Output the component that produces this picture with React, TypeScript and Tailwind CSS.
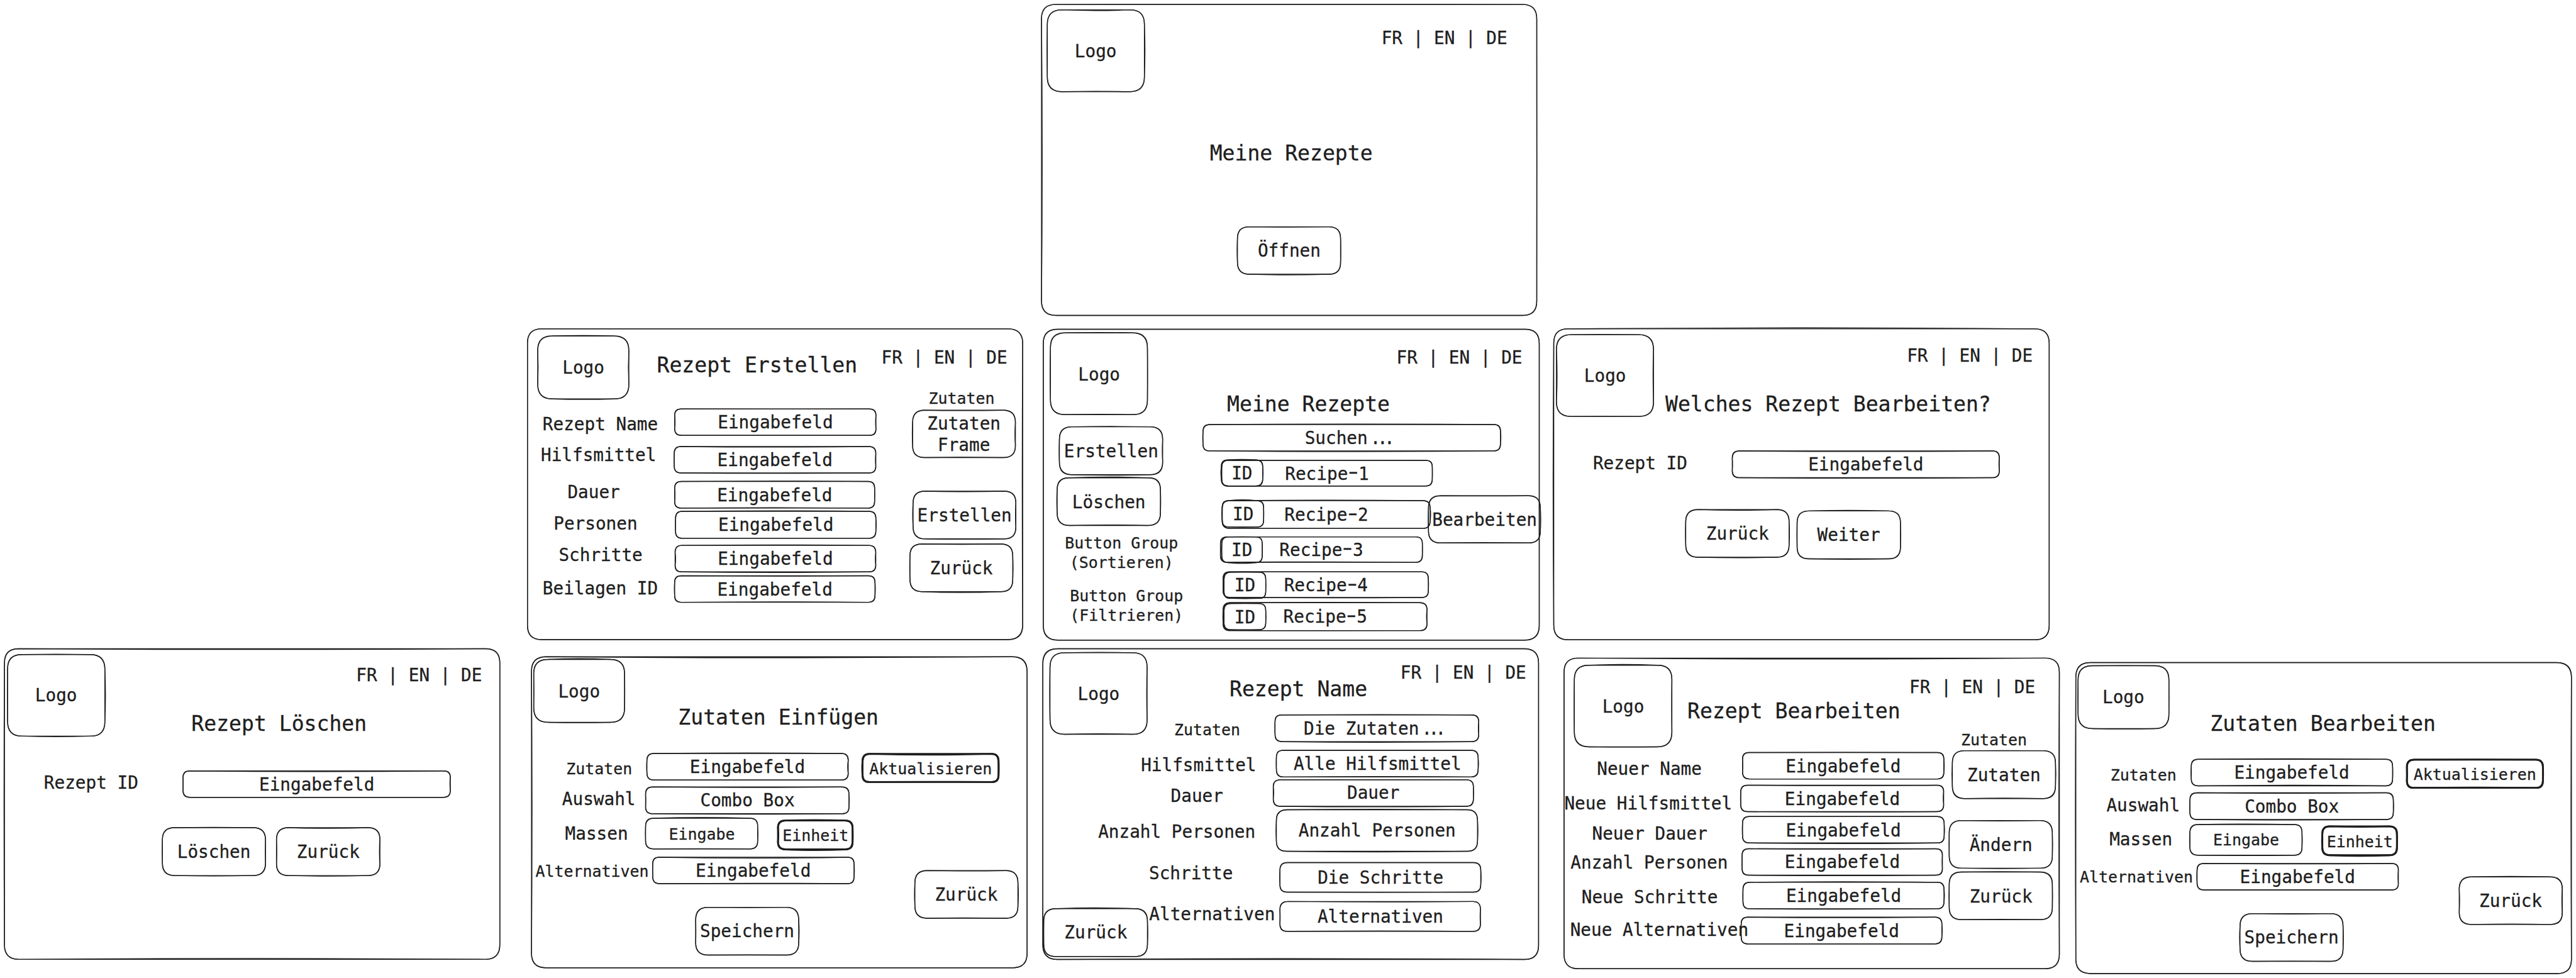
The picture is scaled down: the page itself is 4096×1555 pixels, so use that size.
import React, { type ReactNode } from "react";

type Size = "sm" | "md" | "lg";
type Bow = [number, number, number, number];

const sizeClass: Record<Size, string> = {
  sm: "text-[35.04px] leading-[43px]",
  md: "text-[38.93px] leading-[48px]",
  lg: "text-[46.5px] leading-[58px]",
};

/** Rounded rectangle whose sides sag by the given amounts: top, right, bottom, left. */
function outline(w: number, h: number, bow: Bow, jitter: Bow) {
  const base = Math.min(32, Math.min(w, h) * 0.25);
  const [a, b, c, d] = jitter.map((j) => base + j);
  const [t, r, bt, l] = bow.map((n) => n * 2);
  return [
    `M ${a} 0`,
    `Q ${w / 2} ${-t} ${w - b} 0`,
    `Q ${w} 0 ${w} ${b}`,
    `Q ${w + r} ${h / 2} ${w} ${h - c}`,
    `Q ${w} ${h} ${w - c} ${h}`,
    `Q ${w / 2} ${h + bt} ${d} ${h}`,
    `Q 0 ${h} 0 ${h - d}`,
    `Q ${-l} ${h / 2} 0 ${a}`,
    `Q 0 0 ${a} 0`,
    "Z",
  ].join(" ");
}

type SketchProps = { w: number; h: number; bold?: boolean; bow?: Bow };

/** Pencil outline: one straight pass and one slightly bent pass. */
function Sketch({ w, h, bold, bow = [0.8, 0.4, 0.8, 0.4] }: SketchProps) {
  const n = Math.round(w * 7 + h * 13);
  const jitter: Bow = [(n % 4) - 1, ((n >> 1) % 4) - 1, ((n >> 2) % 4) - 1, ((n >> 3) % 4) - 1];
  return (
    <svg
      className="pointer-events-none absolute inset-0 h-full w-full overflow-visible"
      viewBox={`0 0 ${w} ${h}`}
      fill="none"
      stroke="#1e1e1e"
      strokeWidth={bold ? 4 : 2}
      strokeLinecap="round"
    >
      <path d={outline(w, h, [0, 0, 0, 0], [0, 0, 0, 0])} />
      <path d={outline(w, h, bow, jitter)} />
    </svg>
  );
}

/** Draws the wide hyphen and the tight ellipsis of the board's code font. */
function Glyphs({ text }: { text: string }) {
  return (
    <>
      {text.split(/(\.\.\.|-)/).map((part, i) => {
        if (part === "...")
          return (
            <span key={i} className="relative -left-[6px] inline-block w-[3ch] text-center tracking-[-7.9px]">
              ...
            </span>
          );
        if (part === "-")
          return (
            <span key={i} className="relative -top-[3px] inline-block scale-x-[1.65]">
              -
            </span>
          );
        return part;
      })}
    </>
  );
}

type BoxProps = SketchProps & { text: string; size?: Size; className?: string; children?: ReactNode };

function Box({ w, h, text, size = "md", bold, bow, className = "relative", children }: BoxProps) {
  return (
    <div className={`flex shrink-0 items-center justify-center ${className}`} style={{ width: w, height: h }}>
      <Sketch w={w} h={h} bold={bold} bow={bow} />
      <span className={`pt-[2px] text-center whitespace-pre ${sizeClass[size]}`}>
        <Glyphs text={text} />
      </span>
      {children}
    </div>
  );
}

function Text({ children, size = "md", className = "" }: { children: ReactNode; size?: Size; className?: string }) {
  return <span className={`shrink-0 text-center whitespace-pre ${sizeClass[size]} ${className}`}>{children}</span>;
}

function Languages({ className }: { className: string }) {
  return <Text className={className}>FR | EN | DE</Text>;
}

function Screen({ w, h, bow, className = "", children }: SketchProps & { className?: string; children: ReactNode }) {
  return (
    <section className={`relative flex shrink-0 flex-col items-start ${className}`} style={{ width: w, height: h }}>
      <Sketch w={w} h={h} bow={bow} />
      {children}
    </section>
  );
}

function Column({ className = "", children }: { className?: string; children: ReactNode }) {
  return <div className={`flex shrink-0 flex-col items-start ${className}`}>{children}</div>;
}

function Row({ className = "", children }: { className?: string; children: ReactNode }) {
  return <div className={`flex shrink-0 items-start ${className}`}>{children}</div>;
}

function StartScreen() {
  return (
    <Screen w={1107} h={695} bow={[0.2, 0.3, 0.2, -1.6]}>
      <Row className="w-full justify-between pt-[12.6px] pr-[66px] pl-[12.4px]">
        <Box text="Logo" w={217} h={183} bow={[-1.6, 1.2, -1, 0.6]} />
        <Languages className="mt-[40px]" />
      </Row>
      <Column className="w-full items-center!">
        <Text size="lg" className="mt-[109px] pl-[9px]">
          Meine Rezepte
        </Text>
        <Box className="relative mt-[134.5px]" text="Öffnen" w={230.5} h={106} bow={[-0.6, 0.5, 1.4, 0.8]} />
      </Column>
    </Screen>
  );
}

function CreateScreen() {
  return (
    <Screen className="mt-[0.5px]" w={1107} h={694.7} bow={[-0.4, -1, 0.4, -0.6]}>
      <Row className="h-[132px] pt-[16px] pl-[23.3px]">
        <Box text="Logo" w={203.6} h={140.5} bow={[1, -1, 1.2, -0.8]} />
        <Text size="lg" className="mt-[35.6px] ml-[62.6px]">
          Rezept Erstellen
        </Text>
        <Languages className="mt-[23.4px] ml-[54px]" />
      </Row>
      <Row>
        <Column className="w-[328px] pt-[57.4px] pl-[30px]">
          <Text className="ml-[4px]">Rezept Name</Text>
          <Text className="mt-[21px]">Hilfsmittel</Text>
          <Text className="mt-[34.2px] ml-[59.7px]">Dauer</Text>
          <Text className="mt-[23.6px] ml-[28.5px]">Personen</Text>
          <Text className="mt-[21.8px] ml-[40px]">Schritte</Text>
          <Text className="mt-[26px] ml-[4px]">Beilagen ID</Text>
        </Column>
        <Column className="w-[527px] pt-[46.6px]">
          <Box className="relative ml-[1.3px]" text="Eingabefeld" w={450} h={59.2} bow={[-0.3, -0.8, -0.3, -0.9]} />
          <Box className="relative mt-[25px]" text="Eingabefeld" w={450.7} h={59.2} bow={[-1.2, -0.8, 0.8, 0.4]} />
          <Box className="relative mt-[19.3px] ml-[1.3px]" text="Eingabefeld" w={447} h={59.7} bow={[0.8, 0.4, -0.8, -0.8]} />
          <Box className="relative mt-[6.4px] ml-[3.5px]" text="Eingabefeld" w={447.8} h={60.2} bow={[1.2, 0.8, 0.3, 0.4]} />
          <Box className="relative mt-[16px] ml-[2px]" text="Eingabefeld" w={448.6} h={59.2} bow={[0.9, -1, 1.4, -1.2]} />
          <Box className="relative mt-[9.3px] ml-[1.3px]" text="Eingabefeld" w={447.8} h={59.2} bow={[-0.7, 0.8, -0.9, 0.7]} />
        </Column>
        <Column>
          <Text size="sm" className="mt-[0.8px] ml-[41.7px]">
            Zutaten
          </Text>
          <Box className="relative mt-[6.5px] ml-[5.8px]" text={"Zutaten\nFrame"} w={229.7} h={105.6} bow={[-0.8, -1, -0.5, 0.8]} />
          <Box className="relative mt-[75.3px] ml-[7.2px]" text="Erstellen" w={229.7} h={106.5} bow={[-1, -0.8, 0.8, 1]} />
          <Box className="relative mt-[11.5px]" text="Zurück" w={229.7} h={106.5} bow={[-0.6, 0.8, 1.8, 0.6]} />
        </Column>
      </Row>
    </Screen>
  );
}

function ListScreen() {
  return (
    <Screen className="mt-[0.9px] ml-[45.9px]" w={1108.6} h={694.8} bow={[0.4, 0.2, 0.3, 0.3]}>
      <Row>
        <Column className="w-[357.7px] pt-[8.7px] pl-[16.6px]">
          <Box text="Logo" w={216.8} h={182.8} bow={[0.9, 0.4, -0.8, 0.7]} />
          <Box className="relative mt-[27px] ml-[20px]" text="Erstellen" w={230.8} h={107} bow={[0.8, -0.8, 1, 0.6]} />
          <Box className="relative mt-[7.3px] ml-[14.8px]" text="Löschen" w={230.8} h={106.5} bow={[1.8, 0.6, -1.2, 0.8]} />
          <Text size="sm" className="mt-[17px] ml-[32px]">
            {"Button Group\n(Sortieren)"}
          </Text>
          <Text size="sm" className="mt-[32px] ml-[43px]">
            {"Button Group\n(Filtrieren)"}
          </Text>
        </Column>
        <Column>
          <Languages className="mt-[40.8px] ml-[432px]" />
          <Text size="lg" className="mt-[50.3px] ml-[53.3px]">
            Meine Rezepte
          </Text>
          <Box className="relative mt-[16.4px]" text="Suchen..." w={665} h={58.8} bow={[1.3, 0.8, 1.5, 0.6]} />
          <Box className="relative mt-[21px] ml-[41.4px]" text="Recipe-1" w={470.5} h={57.4} bow={[0.2, 0.4, -0.4, 0.8]}>
            <Box className="absolute -top-px -left-px" text="ID" w={92.5} h={58.3} bow={[1.2, 0.8, 0.6, 1]} />
          </Box>
          <Box className="relative mt-[32.6px] ml-[43px]" text="Recipe-2" w={464.6} h={62} bow={[1, 1.2, 0.3, 0.3]}>
            <Box className="absolute top-0 left-0" text="ID" w={92.5} h={58.8} bow={[1.8, 0.4, 0.5, 1]} />
            <Box className="absolute -top-[10.5px] left-[461px]" text="Bearbeiten" w={250} h={105.6} bow={[-0.5, 0.9, -0.8, 0.6]} />
          </Box>
          <Box className="relative mt-[18.8px] ml-[38.4px]" text="Recipe-3" w={451.3} h={56.9} bow={[-0.4, 0.3, -1, -0.6]}>
            <Box className="absolute top-[0.5px] left-[3px]" text="ID" w={90.3} h={57.4} bow={[0.4, 0.5, 2, 0.5]} />
          </Box>
          <Box className="relative mt-[21.7px] ml-[45px]" text="Recipe-4" w={458.7} h={57.4} bow={[-0.3, 0.5, 0.8, -0.4]}>
            <Box className="absolute top-[0.5px] left-[1.5px]" text="ID" w={93.2} h={58.3} bow={[0.9, 0.5, 0.6, 1]} />
          </Box>
          <Box className="relative mt-[11.5px] ml-[45px]" text="Recipe-5" w={455.7} h={62.5} bow={[0.6, -1, 0.3, 0.5]}>
            <Box className="absolute top-[2.3px] left-[1.5px]" text="ID" w={93.2} h={58.3} bow={[0.4, 0.6, 0.8, 0.9]} />
          </Box>
        </Column>
      </Row>
    </Screen>
  );
}

function ChooseScreen() {
  return (
    <Screen className="ml-[32.3px]" w={1107.5} h={695} bow={[2.2, 0.2, 0.3, 1.4]}>
      <Row className="pt-[13.3px] pl-[6.6px]">
        <Box text="Logo" w={217} h={182.8} bow={[0.6, -1, -0.3, -1.4]} />
        <Column className="pl-[26.2px]">
          <Languages className="mt-[23.4px] ml-[540px]" />
          <Text size="lg" className="mt-[54.4px]">
            Welches Rezept Bearbeiten?
          </Text>
        </Column>
      </Row>
      <Row className="gap-[100.6px] pt-[76.6px] pl-[88px]">
        <Text className="mt-[2.2px]">Rezept ID</Text>
        <Box text="Eingabefeld" w={597} h={59.7} bow={[-1.1, -0.8, 1.2, -0.6]} />
      </Row>
      <Row className="gap-[17.6px] pt-[70.7px] pl-[295.6px]">
        <Box text="Zurück" w={231} h={106.5} bow={[-1.4, 0.8, 1.1, 0.6]} />
        <Box className="relative mt-[2.8px]" text="Weiter" w={231} h={107} bow={[1.3, 0.6, 1, 0.5]} />
      </Row>
    </Screen>
  );
}

function DeleteScreen() {
  return (
    <Screen w={1107.2} h={694.3} bow={[-1.6, 0.3, -1.8, 1]}>
      <Row className="pt-[12.9px] pl-[6.5px]">
        <Box text="Logo" w={217.4} h={182.3} bow={[0.8, 1.3, 1.4, 0.5]} />
        <Column className="pl-[193.8px]">
          <Languages className="mt-[23.3px] ml-[368.3px]" />
          <Text size="lg" className="mt-[54.5px]">
            Rezept Löschen
          </Text>
        </Column>
      </Row>
      <Row className="gap-[100.2px] pt-[76.5px] pl-[88px]">
        <Text className="mt-[2.3px]">Rezept ID</Text>
        <Box text="Eingabefeld" w={597.6} h={59.2} bow={[-1.4, -0.8, -0.5, -0.5]} />
      </Row>
      <Row className="gap-[24.7px] pt-[67.6px] pl-[352.6px]">
        <Box text="Löschen" w={230.5} h={107} bow={[0.9, -0.6, 0.8, 0.5]} />
        <Box text="Zurück" w={231.2} h={107} bow={[-1.4, -1, 1.2, -0.6]} />
      </Row>
    </Screen>
  );
}

type IngredientsProps = { title: string; titleClass: string; className: string; bows: Bow[] };

function IngredientsScreen({ title, titleClass, className, bows }: IngredientsProps) {
  return (
    <Screen className={className} w={1107.8} h={695} bow={bows[0]}>
      <Row className="pt-[6.8px] pl-[4.7px]">
        <Box text="Logo" w={203} h={140.5} bow={bows[1]} />
        <Text size="lg" className={`mt-[100.7px] ${titleClass}`}>
          {title}
        </Text>
      </Row>
      <Row>
        <Column className="w-[255.3px] pt-[64px] pl-[8.8px]">
          <Text size="sm" className="ml-[68.4px]">
            Zutaten
          </Text>
          <Text className="mt-[23.3px] ml-[59.5px]">Auswahl</Text>
          <Text className="mt-[27.5px] ml-[66.2px]">Massen</Text>
          <Text size="sm" className="mt-[37.8px]">
            Alternativen
          </Text>
        </Column>
        <Column className="pt-[50.6px]">
          <Row className="gap-[32.3px] pl-[2.3px]">
            <Box text="Eingabefeld" w={450} h={59.4} bow={bows[2]} />
            <Box className="relative mt-px" text="Aktualisieren" w={304} h={62.9} size="sm" bold bow={bows[3]} />
          </Row>
          <Box className="relative mt-[10.9px]" text="Combo Box" w={454.7} h={59.7} bow={bows[4]} />
          <Row className="gap-[45.5px] pt-[11px]">
            <Box text="Eingabe" w={250.5} h={68.4} size="sm" bow={bows[5]} />
            <Box className="relative mt-[4.6px]" text="Einheit" w={166.7} h={64.5} size="sm" bold bow={bows[6]} />
          </Row>
          <Row className="gap-[136px] pt-[18px]">
            <Column className="gap-[52.6px]">
              <Box className="relative ml-[15.2px]" text="Eingabefeld" w={450} h={59.2} bow={bows[7]} />
              <Box className="relative ml-[111.4px]" text="Speichern" w={230.3} h={106.7} bow={bows[8]} />
            </Column>
            <Box className="relative mt-[30px]" text="Zurück" w={230.3} h={106.3} bow={bows[9]} />
          </Row>
        </Column>
      </Row>
    </Screen>
  );
}

function DetailScreen() {
  return (
    <Screen className="mt-[0.2px] ml-[35.3px]" w={1108.1} h={694.6} bow={[0.3, 0.2, -1.8, 0.3]}>
      <Row className="h-[148px] pt-[8.5px] pl-[16px]">
        <Box text="Logo" w={217} h={182.3} bow={[1.1, -0.8, -1.1, 0.7]} />
        <Text size="lg" className="mt-[52px] ml-[184px]">
          Rezept Name
        </Text>
        <Languages className="mt-[21.5px] ml-[74px]" />
      </Row>
      <Row>
        <Column className="w-[514.8px] pt-[10.3px]">
          <Text size="sm" className="ml-[293.2px]">
            Zutaten
          </Text>
          <Text className="mt-[34.5px] ml-[219px]">Hilfsmittel</Text>
          <Text className="mt-[21.3px] ml-[285.7px]">Dauer</Text>
          <Text className="mt-[31.9px] ml-[123.4px]">Anzahl Personen</Text>
          <Text className="mt-[44.8px] ml-[237px]">Schritte</Text>
          <Row className="gap-[3.5px] pt-[44.3px] pl-[2.2px]">
            <Box className="relative mt-[10.6px]" text="Zurück" w={231.8} h={107} bow={[1.7, 0.8, -0.4, 0.4]} />
            <Text>Alternativen</Text>
          </Row>
        </Column>
        <Column>
          <Box className="relative ml-[4.4px]" text="Die Zutaten..." w={455.4} h={59.7} bow={[0.9, -0.9, 1.4, 0.4]} />
          <Box className="relative mt-[18.8px] ml-[7.4px]" text="Alle Hilfsmittel" w={451} h={59.7} bow={[0.4, 0.9, -1, 0.5]} />
          <Box className="relative mt-[6.4px]" text="Dauer" w={447.4} h={59.2} bow={[-0.3, 0.5, 1.2, -1]} />
          <Box className="relative mt-[7.9px] ml-[7.4px]" text="Anzahl Personen" w={449.6} h={92.8} bow={[1.1, 0.9, 1.4, 0.8]} />
          <Box className="relative mt-[25.7px] ml-[15.4px]" text="Die Schritte" w={448.8} h={66.1} bow={[0.3, 0.9, 0.3, 0.5]} />
          <Box className="relative mt-[20.2px] ml-[15.4px]" text="Alternativen" w={448.1} h={66.6} bow={[-0.8, -0.6, -0.7, -0.4]} />
        </Column>
      </Row>
    </Screen>
  );
}

function EditScreen() {
  return (
    <Screen className="mt-[21.4px] ml-[56.6px]" w={1107.2} h={694.3} bow={[-2, -1.1, 0.3, 0.2]}>
      <Row className="h-[161px] pt-[16px] pl-[23.3px]">
        <Box text="Logo" w={218.1} h={182.3} bow={[1.8, -0.5, 0.4, 0.5]} />
        <Text size="lg" className="mt-[72.5px] ml-[34.4px]">
          Rezept Bearbeiten
        </Text>
        <Languages className="mt-[24.7px] ml-[20.4px]" />
      </Row>
      <Row>
        <Column className="w-[395.5px] pt-[62.6px]">
          <Text className="ml-[73.6px]">Neuer Name</Text>
          <Text className="mt-[29px] ml-[0.8px]">Neue Hilfsmittel</Text>
          <Text className="mt-[20px] ml-[62.7px]">Neuer Dauer</Text>
          <Text className="mt-[16.3px] ml-[14.7px]">Anzahl Personen</Text>
          <Text className="mt-[28.7px] ml-[39.2px]">Neue Schritte</Text>
          <Text className="mt-[26px] ml-[13.8px]">Neue Alternativen</Text>
        </Column>
        <Column className="w-[466px] pt-[49.8px]">
          <Box className="relative ml-[3.6px]" text="Eingabefeld" w={450} h={59.2} bow={[0.4, 0.8, -0.3, -0.5]} />
          <Box className="relative mt-[13.8px]" text="Eingabefeld" w={453.6} h={59.2} bow={[-0.9, -1, 0.8, 0.5]} />
          <Box className="relative mt-[10.6px] ml-[3.6px]" text="Eingabefeld" w={450.7} h={59.2} bow={[0.4, 0.8, 1.3, 0.6]} />
          <Box className="relative mt-[12.4px] ml-[2.9px]" text="Eingabefeld" w={447.8} h={59.2} bow={[-1, -0.6, 1.2, 0.4]} />
          <Box className="relative mt-[16.6px] ml-[5px]" text="Eingabefeld" w={449.3} h={59.2} bow={[1.3, 1, 0.9, 0.5]} />
          <Box className="relative mt-[18.9px] ml-[0.7px]" text="Eingabefeld" w={448.6} h={59.7} bow={[-1.2, 0.8, -0.4, 0.6]} />
        </Column>
        <Column>
          <Text size="sm" className="ml-[25.7px]">
            Zutaten
          </Text>
          <Box className="relative mt-[2.6px] ml-[6.5px]" text="Zutaten" w={230.5} h={107} bow={[0.3, 0.8, -1, 0.9]} />
          <Box className="relative mt-[49.2px]" text="Ändern" w={230.5} h={106.5} bow={[-0.9, 0.6, 1, 0.4]} />
          <Box className="relative mt-[8.7px]" text="Zurück" w={230.5} h={106.5} bow={[0.8, 0.5, -0.8, 0.6]} />
        </Column>
      </Row>
    </Screen>
  );
}

const insertBows: Bow[] = [
  [-2, 0.3, 0.3, -1.2],
  [1.8, 0.5, 0.8, -0.4],
  [1, -1.2, 0.3, 0.7],
  [-1.8, 0.4, -0.4, 0.8],
  [-1, 0.6, 1.1, -0.5],
  [1.8, 0.7, -0.4, 0.4],
  [0.9, 0.4, 1.6, -0.8],
  [-2, 0.8, -0.9, 0.4],
  [-0.7, 1, -0.5, -0.4],
  [-0.8, 1, -0.8, 0.9],
];

const editBows: Bow[] = [
  [0.3, -1, 0.3, 1],
  [0.5, 0.3, 0.8, 0.5],
  [0.9, 0.6, -1.2, 0.7],
  [0.4, 0.5, -0.5, -0.5],
  [-1, 0.7, 1.1, 0.4],
  [1.3, 0.7, 0.8, 0.5],
  [-0.9, 0.4, 1.4, 0.6],
  [-0.8, -0.8, 0.4, 0.6],
  [-1, 0.7, -0.5, 1],
  [1.2, -0.9, -0.8, -0.8],
];

export default function App() {
  return (
    <main className="h-[1555px] w-[4096px] overflow-hidden bg-white">
      <div className="flex h-[2186px] w-[5758px] origin-top-left scale-[0.71136] flex-col items-start pt-[9.9px] font-['DejaVu_Sans_Mono',monospace] text-[#1e1e1e] [-webkit-text-stroke:0.45px_#1e1e1e]">
        <Row className="pl-[2328.2px]">
          <StartScreen />
        </Row>
        <Row className="h-[745.2px] pt-[29.8px] pl-[1178.9px]">
          <CreateScreen />
          <ListScreen />
          <ChooseScreen />
        </Row>
        <Row className="pl-[10.2px]">
          <DeleteScreen />
          <IngredientsScreen
            className="mt-[17.6px] ml-[70.8px]"
            title="Zutaten Einfügen"
            titleClass="ml-[120px]"
            bows={insertBows}
          />
          <DetailScreen />
          <EditScreen />
          <IngredientsScreen
            className="mt-[31px] ml-[37px]"
            title="Zutaten Bearbeiten"
            titleClass="ml-[92.5px]"
            bows={editBows}
          />
        </Row>
      </div>
    </main>
  );
}
